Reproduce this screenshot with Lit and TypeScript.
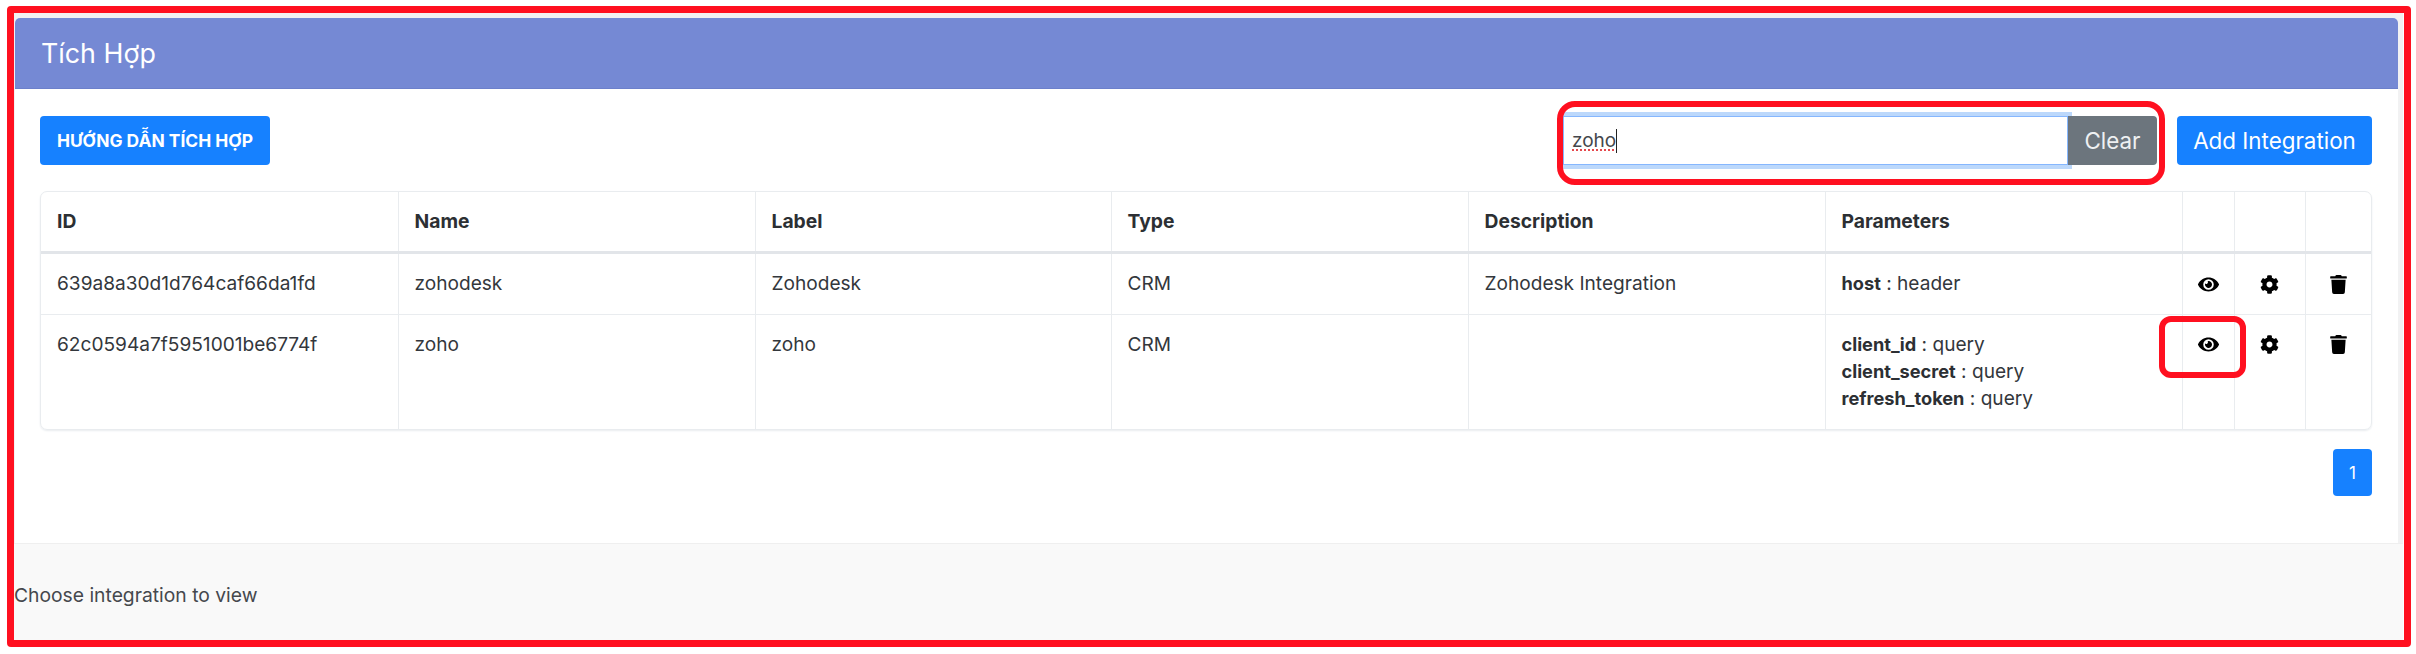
import { LitElement, html, css, svg } from "lit";
import { customElement } from "lit/decorators.js";

const eye = svg`<path d="M572.52 241.4C518.29 135.59 410.93 64 288 64S57.68 135.64 3.48 241.41a32.35 32.35 0 0 0 0 29.19C57.71 376.41 165.07 448 288 448s230.32-71.64 284.52-177.41a32.35 32.35 0 0 0 0-29.19zM288 400a144 144 0 1 1 144-144 143.93 143.93 0 0 1-144 144zm0-240a95.31 95.31 0 0 0-25.31 3.79 47.85 47.85 0 0 1-66.9 66.9A95.78 95.78 0 1 0 288 160z"/>`;
const cog = svg`<path d="M487.4 315.7l-42.6-24.6c4.3-23.2 4.3-47 0-70.2l42.6-24.6c4.9-2.8 7.1-8.6 5.5-14-11.1-35.6-30-67.8-54.7-94.6-3.8-4.1-10-5.1-14.8-2.3L380.8 110c-17.9-15.4-38.5-27.3-60.8-35.1V25.8c0-5.6-3.9-10.5-9.4-11.7-36.7-8.2-74.3-7.8-109.2 0-5.5 1.2-9.4 6.1-9.4 11.7V75c-22.2 7.9-42.8 19.8-60.8 35.1L88.7 85.5c-4.9-2.8-11-1.9-14.8 2.3-24.7 26.7-43.6 58.9-54.7 94.6-1.7 5.4.6 11.2 5.5 14L67.3 221c-4.3 23.2-4.3 47 0 70.2l-42.6 24.6c-4.9 2.8-7.1 8.6-5.5 14 11.1 35.6 30 67.8 54.7 94.6 3.8 4.1 10 5.1 14.8 2.3l42.6-24.6c17.9 15.4 38.5 27.3 60.8 35.1v49.2c0 5.6 3.9 10.5 9.4 11.7 36.7 8.2 74.3 7.8 109.2 0 5.5-1.2 9.4-6.1 9.4-11.7v-49.2c22.2-7.9 42.8-19.8 60.8-35.1l42.6 24.6c4.9 2.8 11 1.9 14.8-2.3 24.7-26.7 43.6-58.9 54.7-94.6 1.5-5.5-.7-11.3-5.6-14.1zM256 336c-44.1 0-80-35.9-80-80s35.9-80 80-80 80 35.9 80 80-35.9 80-80 80z"/>`;
const trash = svg`<path d="M432 32H312l-9.4-18.7A24 24 0 0 0 281.1 0H166.8a23.72 23.72 0 0 0-21.4 13.3L136 32H16A16 16 0 0 0 0 48v32a16 16 0 0 0 16 16h416a16 16 0 0 0 16-16V48a16 16 0 0 0-16-16zM53.2 467a48 48 0 0 0 47.9 45h245.8a48 48 0 0 0 47.9-45L416 128H32z"/>`;

const actions = html`
  <td class="act"><svg class="eye" viewBox="0 0 576 512">${eye}</svg></td>
  <td class="act"><svg class="cog" viewBox="0 0 512 512">${cog}</svg></td>
  <td class="act last"><svg class="trash" viewBox="0 0 448 512">${trash}</svg></td>
`;

@customElement("app-root")
export class AppRoot extends LitElement {
  static styles = css`
    :host {
      display: block;
      position: relative;
      width: 2416px;
      height: 654px;
      background: #fff;
      font-family: Inter, "Noto Sans", sans-serif;
      color: #33373c;
      overflow: hidden;
    }
    .page {
      position: absolute;
      inset: 12px 13px 14px 14px;
      display: flex;
      flex-direction: column;
      background: #f2f2f3;
    }
    .card {
      margin: 6px 5px 0 1px;
      background: #fff;
      height: 525px;
      border-radius: 5px 5px 0 0;
      display: flex;
      flex-direction: column;
      flex: none;
    }
    .head {
      height: 71px;
      flex: none;
      background: #7589d4;
      border-radius: 5px 5px 0 0;
      border-bottom: 1px solid #6c80cb;
      box-sizing: border-box;
      color: #fff;
      font-size: 26.8px;
      line-height: 71px;
      padding-left: 26px;
    }
    .body {
      padding: 27px 26px 0 25px;
    }
    .bar {
      display: flex;
      align-items: center;
      height: 49px;
    }
    .btn {
      height: 49px;
      box-sizing: border-box;
      border-radius: 4px;
      background: #1681ff;
      color: #fff;
      display: flex;
      align-items: center;
      justify-content: center;
    }
    .guide {
      width: 230px;
      font-size: 17.4px;
      font-weight: 700;
    }
    .search {
      margin-left: auto;
      display: flex;
      width: 594px;
      margin-right: 20px;
    }
    .input {
      width: 505px;
      height: 49px;
      box-sizing: border-box;
      background: #fff;
      border: 1px solid #86b7fe;
      box-shadow: 0 0 0 4px #bcd8fb;
      font-size: 19px;
      line-height: 47px;
      padding-left: 8px;
      color: #44474c;
      display: flex;
      align-items: center;
    }
    .typed {
      text-decoration: underline dotted #e5484d 2px;
      text-underline-offset: 3px;
      border-right: 1px solid #222;
      line-height: 24px;
    }
    .clear {
      width: 89px;
      background: #6c757d;
      font-size: 22.4px;
      color: #eef0f2;
      border-radius: 0 4px 4px 0;
      position: relative;
    }
    .add {
      width: 195px;
      font-size: 22.4px;
    }
    .tablewrap {
      margin-top: 26px;
      border: 1px solid #e9ecef;
      border-radius: 7px;
      box-shadow: 0 1px 2px #e9ecef;
      overflow: hidden;
    }
    table {
      border-collapse: collapse;
      table-layout: fixed;
      width: 100%;
      font-size: 19.1px;
    }
    th {
      height: 60px;
      padding: 0 16px;
      text-align: left;
      font-weight: 700;
      font-size: 19.3px;
      color: #2c2f33;
      border-right: 1px solid #e9ecef;
      border-bottom: 3px solid #e2e5e9;
      box-sizing: border-box;
    }
    td {
      padding: 16px 16px 16px;
      vertical-align: top;
      line-height: 27px;
      border-right: 1px solid #e9ecef;
      border-bottom: 1px solid #e9ecef;
    }
    th.last, td.last { border-right: 0; }
    tr.end td { border-bottom: 0; }
    td.act {
      padding: 0;
      text-align: center;
      padding-top: 21px;
      line-height: 0;
    }
    tr.r1 td { height: 62px; box-sizing: border-box; }
    tr.r2 td { height: 115px; box-sizing: border-box; }
    tr.r2 td.act { padding-top: 20px; }
    svg { fill: #000; display: inline-block; }
    .eye { width: 21px; height: 19px; }
    .cog { width: 19px; height: 19px; }
    .trash { width: 17px; height: 19px; }
    b { font-weight: 700; color: #2c2f33; font-size: 18.2px; }
    .pager {
      display: flex;
      justify-content: flex-end;
      margin-top: 19px;
    }
    .pg {
      width: 39px;
      height: 47px;
      font-size: 17px;
      background: #1681ff;
      color: #fff;
      border-radius: 4px;
      display: flex;
      align-items: center;
      justify-content: center;
    }
    .foot {
      flex: 1;
      background: #f9f9f9;
      border-top: 1px solid #efefef;
      display: flex;
      align-items: center;
      font-size: 19.3px;
      color: #45484d;
      padding-top: 6px;
      box-sizing: border-box;
    }
    .mark {
      position: absolute;
      box-sizing: border-box;
      border: 6px solid #ff1020;
      pointer-events: none;
    }
    .m1 { left: 7px; top: 6px; width: 2404px; height: 641px; border-width: 7px; border-radius: 4px; }
    .m2 { left: 1557px; top: 101px; width: 608px; height: 84px; border-radius: 18px; }
    .m3 { left: 2159px; top: 316px; width: 87px; height: 62px; border-radius: 12px; }
  `;

  render() {
    return html`
      <div class="page">
        <div class="card">
          <div class="head">Tích Hợp</div>
          <div class="body">
            <div class="bar">
              <div class="btn guide">HƯỚNG DẪN TÍCH HỢP</div>
              <div class="search">
                <div class="input"><span class="typed">zoho</span></div>
                <div class="btn clear">Clear</div>
              </div>
              <div class="btn add">Add Integration</div>
            </div>
            <div class="tablewrap">
              <table>
                <colgroup>
                  <col style="width:357px" /><col style="width:357px" /><col style="width:356px" />
                  <col style="width:357px" /><col style="width:357px" /><col style="width:357px" />
                  <col style="width:52px" /><col style="width:71px" /><col />
                </colgroup>
                <thead>
                  <tr>
                    <th>ID</th><th>Name</th><th>Label</th><th>Type</th><th>Description</th><th>Parameters</th>
                    <th></th><th></th><th class="last"></th>
                  </tr>
                </thead>
                <tbody>
                  <tr class="r1">
                    <td>639a8a30d1d764caf66da1fd</td><td>zohodesk</td><td>Zohodesk</td><td>CRM</td>
                    <td>Zohodesk Integration</td><td><b>host</b> : header</td>
                    ${actions}
                  </tr>
                  <tr class="r2 end">
                    <td>62c0594a7f5951001be6774f</td><td>zoho</td><td>zoho</td><td>CRM</td><td></td>
                    <td><b>client_id</b> : query<br /><b>client_secret</b> : query<br /><b>refresh_token</b> : query</td>
                    ${actions}
                  </tr>
                </tbody>
              </table>
            </div>
            <div class="pager"><div class="pg">1</div></div>
          </div>
        </div>
        <div class="foot">Choose integration to view</div>
      </div>
      <div class="mark m1"></div>
      <div class="mark m2"></div>
      <div class="mark m3"></div>
    `;
  }
}
